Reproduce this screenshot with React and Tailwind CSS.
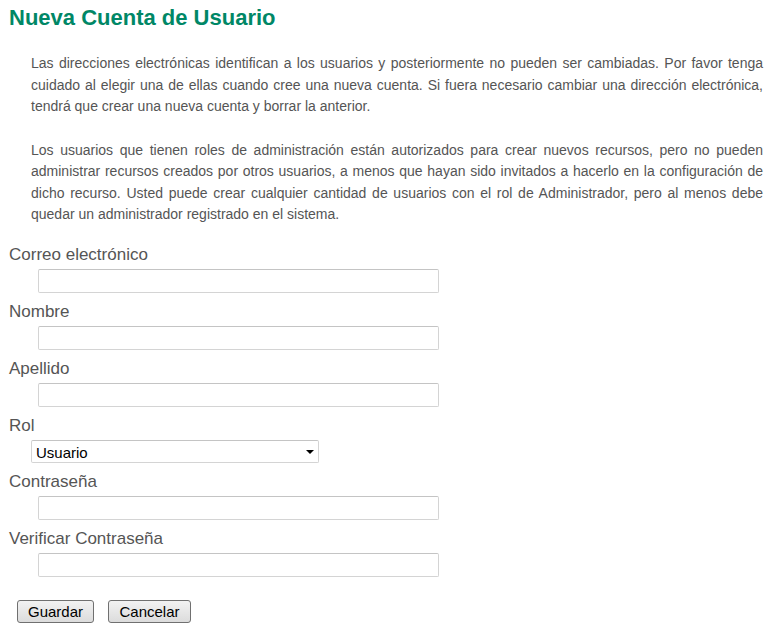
import React from 'react'

const fields = [
	{ label: "Correo electrónico", type: "text" },
	{ label: "Nombre", type: "text" },
	{ label: "Apellido", type: "text" },
]

const passwords = ["Contraseña", "Verificar Contraseña"]

function Label({ children }) {
	return <div className="pl-[9px] text-[17px] leading-[20px] text-[#555555]">{children}</div>
}

function TextInput({ type }) {
	return (
		<div className="pl-[38px] pt-[4px] pb-[9px]">
			<input type={type} className="block w-[401px] h-[24px] border border-[#d4d4d4] border-t-[#c4c4c4] rounded-[2px] bg-white outline-none" />
		</div>
	)
}

function Button({ children, width }) {
	return (
		<button className={`h-[23px] ${width} border border-[#707070] rounded-[3px] bg-gradient-to-b from-[#f2f2f2] to-[#dcdcdc] text-[15px] text-black leading-none`}>
			{children}
		</button>
	)
}

export default function App() {
	return (
		<div className="w-[780px] min-h-[632px] bg-white font-['Liberation_Sans',Arial,sans-serif]">
			<h1 className="pl-[9px] pt-[5px] text-[22px] leading-[26px] font-bold text-[#008766]">Nueva Cuenta de Usuario</h1>

			<div className="pl-[31px] pr-[17px] pt-[22px] text-[14px] leading-[21.5px] text-[#555555] text-justify">
				<p>
					Las direcciones electrónicas identifican a los usuarios y posteriormente no pueden ser cambiadas. Por favor tenga cuidado al elegir una de ellas cuando cree una nueva cuenta. Si fuera necesario cambiar una dirección electrónica, tendrá que crear una nueva cuenta y borrar la anterior.
				</p>
				<p className="mt-[22px]">
					Los usuarios que tienen roles de administración están autorizados para crear nuevos recursos, pero no pueden administrar recursos creados por otros usuarios, a menos que hayan sido invitados a hacerlo en la configuración de dicho recurso. Usted puede crear cualquier cantidad de usuarios con el rol de Administrador, pero al menos debe quedar un administrador registrado en el sistema.
				</p>
			</div>

			<form className="pt-[19px]">
				{fields.map(f => (
					<div key={f.label}>
						<Label>{f.label}</Label>
						<TextInput type={f.type} />
					</div>
				))}

				<Label>Rol</Label>
				<div className="pl-[31px] pt-[4px] pb-[9px]">
					<div className="relative w-[288px] h-[23px] border border-[#d4d4d4] border-t-[#c4c4c4] rounded-[2px] bg-white">
						<span className="absolute left-[4px] top-[1px] text-[15px] text-black">Usuario</span>
						<svg className="absolute right-[4px] top-[9px]" width="8" height="4" viewBox="0 0 8 4">
							<path d="M0 0 L8 0 L4 4 Z" fill="#000" />
						</svg>
					</div>
				</div>

				{passwords.map(p => (
					<div key={p}>
						<Label>{p}</Label>
						<TextInput type="password" />
					</div>
				))}

				<div className="flex gap-[14px] pl-[17px] pt-[14px]">
					<Button width="w-[77px]">Guardar</Button>
					<Button width="w-[83px]">Cancelar</Button>
				</div>
			</form>
		</div>
	)
}
